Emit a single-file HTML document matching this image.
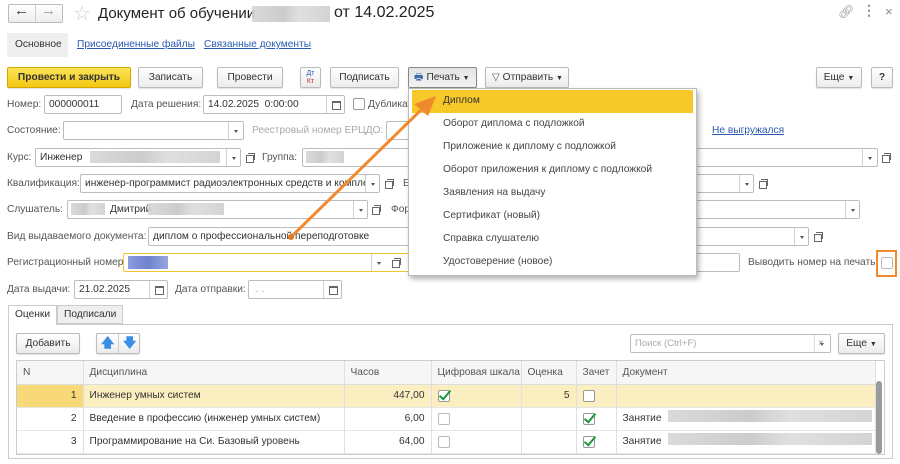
<!DOCTYPE html>
<html><head><meta charset="utf-8"><style>
*{box-sizing:border-box;margin:0;padding:0}
body{width:900px;height:464px;background:#fff;font-family:"Liberation Sans",Arial,sans-serif;font-size:10.2px;color:#404040;position:relative;overflow:hidden}
.a{position:absolute;white-space:nowrap}
.lbl{position:absolute;color:#555;line-height:20px;white-space:nowrap}
.in{position:absolute;height:19px;border:1px solid #bdbdbd;border-radius:2px;background:#fff;line-height:17px;padding-left:4px;color:#333;white-space:nowrap;overflow:hidden}
.dd{position:absolute;top:0;width:14px;height:17px;border-left:1px solid #d0d0d0;background:#fff}
.dd:after{content:"";position:absolute;left:5px;top:8px;border:2px solid transparent;border-top:3px solid #555}
.op{position:absolute;width:15px;height:19px}
.op:before{content:"";position:absolute;left:4px;top:7px;width:6px;height:6px;border:1px solid #666}
.op:after{content:"";position:absolute;left:6px;top:5px;width:6px;height:6px;border:1px solid #666;border-left:none;border-bottom:none}
.btn{position:absolute;height:21px;border:1px solid #bbb;border-radius:2px;background:linear-gradient(#fff,#ebebeb);line-height:19px;text-align:center;color:#333;box-shadow:0 1px 1px rgba(0,0,0,.12);white-space:nowrap}
.blur{position:absolute;background:linear-gradient(90deg,#d6d6d6,#c6c6c6 40%,#dcdcdc 60%,#cfcfcf);opacity:.9}
.cal{position:absolute;top:0;right:0;width:18px;height:17px;border-left:1px solid #d0d0d0;background:#fff}
.cal:after{content:"";position:absolute;left:5px;top:5px;width:7px;height:6px;border:1px solid #666;border-top-width:2px}
.cb{position:absolute;width:12px;height:12px;border:1px solid #999;border-radius:2px;background:#fff}
.chk{position:absolute;width:12px;height:12px;border:1px solid #999;border-radius:2px;background:#fff}
.chk:after{content:"";position:absolute;left:3px;top:-3px;width:4px;height:10px;border-right:2px solid #1a9a3a;border-bottom:2px solid #1a9a3a;transform:rotate(40deg)}
.mi{position:absolute;left:3px;width:281px;height:23px;line-height:22px;padding-left:31px;color:#444}
td,th{font-weight:normal;text-align:left;padding:0 6px;border-right:1px solid #e0e0e0;white-space:nowrap;overflow:hidden}
</style></head><body>

<!-- title bar -->
<div class="a" style="left:8px;top:4px;width:55px;height:19px;border:1px solid #bbb;border-radius:2px;background:linear-gradient(#fff,#eee)"></div>
<div class="a" style="left:35px;top:5px;width:1px;height:17px;background:#ccc"></div>
<div class="a" style="left:14px;top:2px;font-size:15px;color:#333">←</div>
<div class="a" style="left:41px;top:2px;font-size:15px;color:#999">→</div>
<div class="a" style="left:73px;top:1px;font-size:20px;color:#ccc">☆</div>
<div class="a" style="left:98px;top:5px;font-size:15px;color:#222">Документ об обучении</div>
<div class="blur" style="left:252px;top:6px;width:78px;height:16px"></div>
<div class="a" style="left:334px;top:4px;font-size:16px;color:#222">от 14.02.2025</div>
<div class="a" style="left:838px;top:4px;font-size:13px;color:#999">🔗︎</div>
<div class="a" style="left:862px;top:2px;font-size:14px;color:#888;font-weight:bold">⋮</div>
<div class="a" style="left:885px;top:4px;font-size:13px;color:#888">×</div>

<!-- tabs -->
<div class="a" style="left:7px;top:33px;width:61px;height:24px;background:#efefef;line-height:24px;padding-left:8px;color:#333">Основное</div>
<div class="a" style="left:77px;top:39px;color:#2a5ab0;text-decoration:underline">Присоединенные файлы</div>
<div class="a" style="left:204px;top:39px;color:#2a5ab0;text-decoration:underline">Связанные документы</div>

<!-- toolbar -->
<div class="btn" style="left:7px;top:67px;width:124px;background:linear-gradient(#fbe45a,#f2c811);border-color:#d6a800;font-weight:bold;color:#333">Провести и закрыть</div>
<div class="btn" style="left:138px;top:67px;width:65px">Записать</div>
<div class="btn" style="left:217px;top:67px;width:66px">Провести</div>
<div class="btn" style="left:300px;top:67px;width:21px;font-size:7px;line-height:8px;padding-top:2px"><span style="color:#2a5ab0">Дт</span><br><span style="color:#c03030">Кт</span></div>
<div class="btn" style="left:330px;top:67px;width:69px">Подписать</div>
<div class="btn" style="left:408px;top:67px;width:69px;background:linear-gradient(#e4e4e4,#f2f2f2);border-color:#888;text-align:left;padding-left:5px"><span style="color:#3a6aa8">🖶︎</span> Печать <span style="font-size:7px">▼</span></div>
<div class="btn" style="left:485px;top:67px;width:84px;text-align:left;padding-left:6px"><span style="color:#555">▽</span> Отправить <span style="font-size:7px">▼</span></div>
<div class="btn" style="left:816px;top:67px;width:46px">Еще <span style="font-size:7px">▼</span></div>
<div class="btn" style="left:871px;top:67px;width:22px;font-weight:bold">?</div>

<!-- row Номер -->
<div class="lbl" style="left:7px;top:95px">Номер:</div>
<div class="in" style="left:44px;top:95px;width:78px">000000011</div>
<div class="lbl" style="left:131px;top:95px">Дата решения:</div>
<div class="in" style="left:203px;top:95px;width:142px">14.02.2025&nbsp; 0:00:00<div class="cal"></div></div>
<div class="cb" style="left:353px;top:98px"></div>
<div class="lbl" style="left:368px;top:95px">Дубликат</div>

<div class="lbl" style="left:7px;top:121px">Состояние:</div>
<div class="in" style="left:63px;top:121px;width:181px"><div class="dd" style="left:164px"></div></div>
<div class="lbl" style="left:252px;top:121px;color:#aaa">Реестровый номер ЕРЦДО:</div>
<div class="in" style="left:386px;top:121px;width:40px"></div>
<div class="a" style="left:712px;top:125px;color:#2a5ab0;text-decoration:underline">Не выгружался</div>

<div class="lbl" style="left:7px;top:148px">Курс:</div>
<div class="in" style="left:35px;top:148px;width:206px">Инженер<div class="dd" style="left:190px"></div></div>
<div class="blur" style="left:90px;top:151px;width:130px;height:12px"></div>
<div class="op" style="left:242px;top:148px"></div>
<div class="lbl" style="left:262px;top:148px">Группа:</div>
<div class="in" style="left:302px;top:148px;width:120px"></div>
<div class="blur" style="left:306px;top:151px;width:38px;height:12px"></div>
<div class="in" style="left:690px;top:148px;width:188px"><div class="dd" style="left:171px"></div></div>
<div class="op" style="left:878px;top:148px"></div>

<div class="lbl" style="left:7px;top:174px">Квалификация:</div>
<div class="in" style="left:80px;top:174px;width:300px">инженер-программист радиоэлектронных средств и комплек<div class="dd" style="left:284px"></div></div>
<div class="op" style="left:381px;top:174px"></div>
<div class="lbl" style="left:403px;top:174px">Е</div>
<div class="in" style="left:690px;top:174px;width:64px"><div class="dd" style="left:48px"></div></div>
<div class="op" style="left:755px;top:174px"></div>

<div class="lbl" style="left:7px;top:200px">Слушатель:</div>
<div class="in" style="left:67px;top:200px;width:301px"><span style="margin-left:38px">Дмитрий</span><div class="dd" style="left:285px"></div></div>
<div class="blur" style="left:71px;top:203px;width:34px;height:12px"></div>
<div class="blur" style="left:148px;top:203px;width:76px;height:12px"></div>
<div class="op" style="left:368px;top:200px"></div>
<div class="lbl" style="left:391px;top:200px">Фор</div>
<div class="in" style="left:690px;top:200px;width:170px"><div class="dd" style="left:154px"></div></div>

<div class="lbl" style="left:7px;top:227px">Вид выдаваемого документа:</div>
<div class="in" style="left:148px;top:227px;width:661px">диплом о профессиональной переподготовке<div class="dd" style="left:645px"></div></div>
<div class="op" style="left:810px;top:227px"></div>

<div class="lbl" style="left:7px;top:253px">Регистрационный номер:</div>
<div class="in" style="left:123px;top:253px;width:287px;border-color:#f0c531"><div class="dd" style="left:247px"></div></div>
<div class="blur" style="left:128px;top:256px;width:40px;height:13px;background:linear-gradient(90deg,#7f93d8,#5e74c8,#8a9ddd)"></div>
<div class="op" style="left:388px;top:253px"></div>
<div class="in" style="left:690px;top:253px;width:50px"></div>
<div class="lbl" style="left:748px;top:253px">Выводить номер на печать</div>
<div class="a" style="left:876px;top:250px;width:21px;height:27px;border:2px solid #f08a2e"></div>
<div class="cb" style="left:881px;top:257px;border-color:#bbb"></div>

<div class="lbl" style="left:7px;top:280px">Дата выдачи:</div>
<div class="in" style="left:74px;top:280px;width:94px">21.02.2025<div class="cal"></div></div>
<div class="lbl" style="left:175px;top:280px">Дата отправки:</div>
<div class="in" style="left:248px;top:280px;width:94px;color:#999">&nbsp;. .<div class="cal"></div></div>

<!-- lower tabs -->
<div class="a" style="left:8px;top:305px;width:49px;height:20px;border:1px solid #ccc;border-bottom:none;background:#fff;line-height:18px;padding-left:6px;color:#333;z-index:2">Оценки</div>
<div class="a" style="left:57px;top:305px;width:66px;height:19px;border:1px solid #ccc;background:#eee;line-height:18px;padding-left:6px;color:#333">Подписали</div>
<div class="a" style="left:8px;top:324px;width:885px;height:135px;border:1px solid #ccc"></div>
<div class="btn" style="left:16px;top:333px;width:64px">Добавить</div>
<div class="btn" style="left:96px;top:333px;width:44px"></div>
<div class="a" style="left:118px;top:334px;width:1px;height:19px;background:#ccc"></div>
<div class="a" style="left:101px;top:334px;color:#3a8ee6;font-size:13px;font-weight:bold">🡅︎</div>
<div class="a" style="left:123px;top:334px;color:#3a8ee6;font-size:13px;font-weight:bold">🡇︎</div>
<div class="in" style="left:630px;top:334px;width:201px;color:#aaa;font-size:9.5px">Поиск (Ctrl+F)<div class="dd" style="left:183px;width:16px;border-left:1px solid #ddd"></div></div>
<div class="a" style="left:818px;top:338px;color:#888;font-size:10px">×</div>
<div class="btn" style="left:838px;top:333px;width:47px">Еще <span style="font-size:7px">▼</span></div>

<div class="a" style="left:16px;top:360px;width:869px;height:95px;border:1px solid #ccc;overflow:hidden">
<table style="border-collapse:collapse;width:859px;font-size:10.2px;color:#333;table-layout:fixed">
<colgroup><col style="width:66px"><col style="width:261px"><col style="width:87px"><col style="width:90px"><col style="width:55px"><col style="width:40px"><col></colgroup>
<tr style="height:23px;background:#f6f6f6;color:#555;border-bottom:1px solid #ddd"><th>N</th><th>Дисциплина</th><th>Часов</th><th>Цифровая шкала</th><th>Оценка</th><th>Зачет</th><th>Документ</th></tr>
<tr style="height:23px;background:#fbeec0;border-bottom:1px solid #e6e6e6"><td style="text-align:right;background:#f7d977">1</td><td>Инженер умных систем</td><td style="text-align:right">447,00</td><td><div class="chk" style="position:relative;top:0"></div></td><td style="text-align:right">5</td><td><div class="cb" style="position:relative"></div></td><td></td></tr>
<tr style="height:23px;border-bottom:1px solid #e6e6e6"><td style="text-align:right">2</td><td>Введение в профессию (инженер умных систем)</td><td style="text-align:right">6,00</td><td><div class="cb" style="position:relative;border-color:#bbb"></div></td><td></td><td><div class="chk" style="position:relative"></div></td><td>Занятие</td></tr>
<tr style="height:23px;border-bottom:1px solid #e6e6e6"><td style="text-align:right">3</td><td>Программирование на Си. Базовый уровень</td><td style="text-align:right">64,00</td><td><div class="cb" style="position:relative;border-color:#bbb"></div></td><td></td><td><div class="chk" style="position:relative"></div></td><td>Занятие</td></tr>
</table>
<div class="a" style="left:859px;top:20px;width:6px;height:73px;background:#9a9a9a;border-radius:3px"></div>
</div>
<div class="blur" style="left:668px;top:410px;width:204px;height:12px"></div>
<div class="blur" style="left:668px;top:433px;width:204px;height:12px"></div>

<!-- dropdown menu -->
<div class="a" style="left:408px;top:88px;width:289px;height:188px;background:#fff;border:1px solid #bbb;box-shadow:2px 3px 5px rgba(0,0,0,.3)">
<div class="mi" style="top:1px;background:#f7c928;color:#333">Диплом</div>
<div class="mi" style="top:24px">Оборот диплома с подложкой</div>
<div class="mi" style="top:47px">Приложение к диплому с подложкой</div>
<div class="mi" style="top:70px">Оборот приложения к диплому с подложкой</div>
<div class="mi" style="top:93px">Заявления на выдачу</div>
<div class="mi" style="top:116px">Сертификат (новый)</div>
<div class="mi" style="top:139px">Справка слушателю</div>
<div class="mi" style="top:162px">Удостоверение (новое)</div>
</div>

<!-- arrow -->
<svg class="a" style="left:0;top:0" width="900" height="464">
<line x1="291" y1="237" x2="423" y2="108" stroke="#f08a2e" stroke-width="3" stroke-linecap="round"/>
<polygon points="436,96 414,104 428,116" fill="#f08a2e"/>
<circle cx="291" cy="237" r="3" fill="#e07a20"/>
</svg>
</body></html>
